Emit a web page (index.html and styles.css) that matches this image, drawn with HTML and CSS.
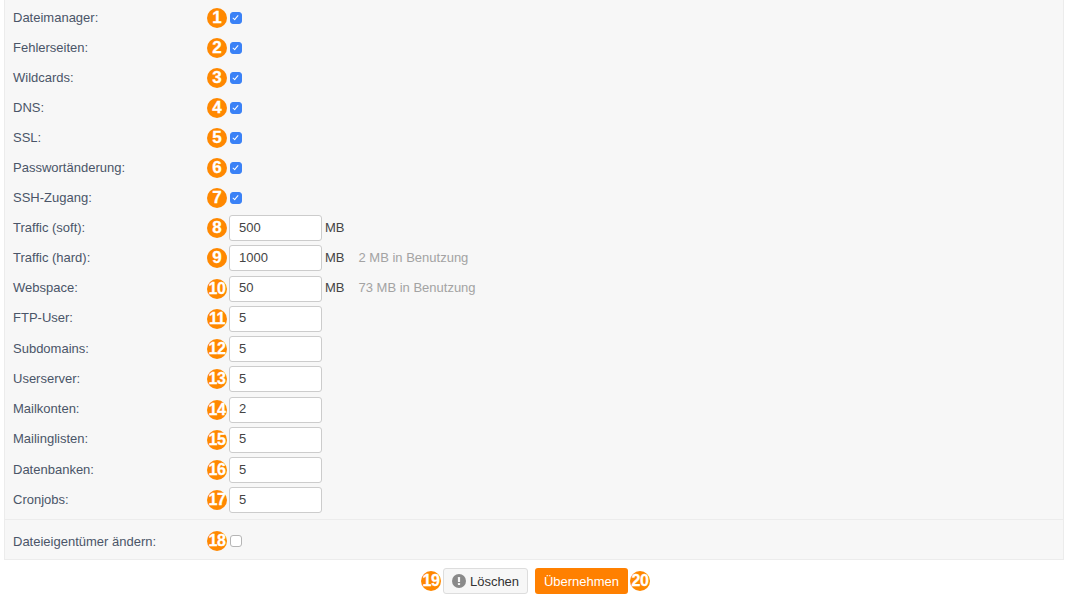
FILE: index.html
```html
<!DOCTYPE html>
<html lang="de">
<head>
  <meta charset="UTF-8">
  <title>Einstellungen</title>
  <link rel="stylesheet" href="styles.css">
</head>
<body>
  <form class="settings">
    <div class="panel">
      <div class="rows">
        <div class="row check"><label>Dateimanager:</label><span class="badge">1</span><input type="checkbox" checked></div>
        <div class="row check"><label>Fehlerseiten:</label><span class="badge">2</span><input type="checkbox" checked></div>
        <div class="row check"><label>Wildcards:</label><span class="badge">3</span><input type="checkbox" checked></div>
        <div class="row check"><label>DNS:</label><span class="badge">4</span><input type="checkbox" checked></div>
        <div class="row check"><label>SSL:</label><span class="badge">5</span><input type="checkbox" checked></div>
        <div class="row check"><label>Passwortänderung:</label><span class="badge">6</span><input type="checkbox" checked></div>
        <div class="row check"><label>SSH-Zugang:</label><span class="badge">7</span><input type="checkbox" checked></div>
        <div class="row"><label>Traffic (soft):</label><span class="badge">8</span><input type="text" value="500"><span class="unit">MB</span></div>
        <div class="row"><label>Traffic (hard):</label><span class="badge">9</span><input type="text" value="1000"><span class="unit">MB</span><span class="usage">2 MB in Benutzung</span></div>
        <div class="row"><label>Webspace:</label><span class="badge wide">10</span><input type="text" value="50"><span class="unit">MB</span><span class="usage">73 MB in Benutzung</span></div>
        <div class="row"><label>FTP-User:</label><span class="badge wide">11</span><input type="text" value="5"></div>
        <div class="row"><label>Subdomains:</label><span class="badge wide">12</span><input type="text" value="5"></div>
        <div class="row"><label>Userserver:</label><span class="badge wide">13</span><input type="text" value="5"></div>
        <div class="row"><label>Mailkonten:</label><span class="badge wide">14</span><input type="text" value="2"></div>
        <div class="row"><label>Mailinglisten:</label><span class="badge wide">15</span><input type="text" value="5"></div>
        <div class="row"><label>Datenbanken:</label><span class="badge wide">16</span><input type="text" value="5"></div>
        <div class="row"><label>Cronjobs:</label><span class="badge wide">17</span><input type="text" value="5"></div>
      </div>
      <div class="owner">
        <div class="row check"><label>Dateieigentümer ändern:</label><span class="badge wide">18</span><input type="checkbox"></div>
      </div>
    </div>
    <div class="actions">
      <span class="badge wide">19</span>
      <button type="button" class="btn">
        <svg viewBox="0 0 14 14" width="14" height="14"><circle cx="7" cy="7" r="7" fill="#8a8a8a"/><rect x="5.9" y="3" width="2.2" height="5" rx="0.6" fill="#f7f7f7"/><rect x="5.9" y="9" width="2.2" height="2.1" rx="0.6" fill="#f7f7f7"/></svg>
        Löschen
      </button>
      <button type="button" class="btn primary">Übernehmen</button>
      <span class="badge wide">20</span>
    </div>
  </form>
</body>
</html>
```

FILE: styles.css
```css
body {
  margin: 0;
  background: #fff;
  font-family: "Liberation Sans", Arial, sans-serif;
  font-size: 13px;
  color: #4a5568;
  overflow: hidden;
}
.settings {
  width: 1060px;
  margin-left: 4px;
}
/* grauer Kasten mit allen Zeilen */
.panel {
  background: #f7f7f7;
  border: 1px solid #ececec;
  border-top: 0;
  height: 560px;
  box-sizing: border-box;
}
.rows {
  padding-top: 3px;
  height: 519px;
  box-sizing: border-box;
}
.row {
  display: flex;
  align-items: center;
  height: 30.25px;
  padding-left: 8px;
}
.row.check {
  height: 30px;
}
.row label {
  width: 194px;
  flex: none;
  margin-bottom: 2px;
}
.owner .row label {
  margin-bottom: 0;
}
/* Checkbox selbst gezeichnet, Haken ist kleiner als der native */
.row input[type="checkbox"] {
  appearance: none;
  position: relative;
  width: 12px;
  height: 12px;
  box-sizing: border-box;
  margin: 0 0 0 3px;
  border: 1px solid #b5b5b5;
  border-radius: 3px;
  background: #fff;
}
.row input[type="checkbox"]:checked {
  border-color: #3b82f6;
  background: #3b82f6;
}
.row input[type="checkbox"]:checked::after {
  content: "";
  position: absolute;
  left: 3px;
  top: 1px;
  width: 3px;
  height: 6px;
  border: solid #fff;
  border-width: 0 1.5px 1.5px 0;
  box-sizing: border-box;
  transform: rotate(40deg);
}
.row input[type="text"] {
  width: 93px;
  height: 26px;
  box-sizing: border-box;
  margin: 0 0 0 2px;
  padding: 0 9px 2px;
  border: 1px solid #ccc;
  border-radius: 3px;
  background: #fff;
  color: #444;
  font: 13px "Liberation Sans", Arial, sans-serif;
}
.unit {
  margin: 0 0 2px 3px;
  color: #444;
}
.usage {
  margin: 0 0 2px 14px;
  color: #a3a3a3;
}
.owner {
  border-top: 1px solid #ececec;
  padding-top: 6px;
}
/* orange Nummern */
.badge {
  flex: none;
  width: 20px;
  height: 20px;
  border-radius: 50%;
  background: #ff8800;
  color: #fff;
  font-size: 17px;
  font-weight: bold;
  line-height: 20px;
  text-align: center;
  -webkit-text-stroke: 0.3px #fff;
}
.badge.wide {
  font-size: 16px;
  letter-spacing: -0.4px;
}
.actions {
  display: flex;
  align-items: center;
  justify-content: center;
  height: 42px;
  padding-left: 3px;
  gap: 2px;
}
.btn {
  display: flex;
  align-items: center;
  justify-content: center;
  gap: 4px;
  width: 85px;
  height: 26px;
  box-sizing: border-box;
  padding: 0;
  border: 1px solid #ddd;
  border-radius: 3px;
  background: #f7f7f7;
  color: #333;
  font: 13px "Liberation Sans", Arial, sans-serif;
}
.btn.primary {
  width: 93px;
  margin-left: 5px;
  border: 0;
  background: #ff8000;
  color: #fff;
}
```
